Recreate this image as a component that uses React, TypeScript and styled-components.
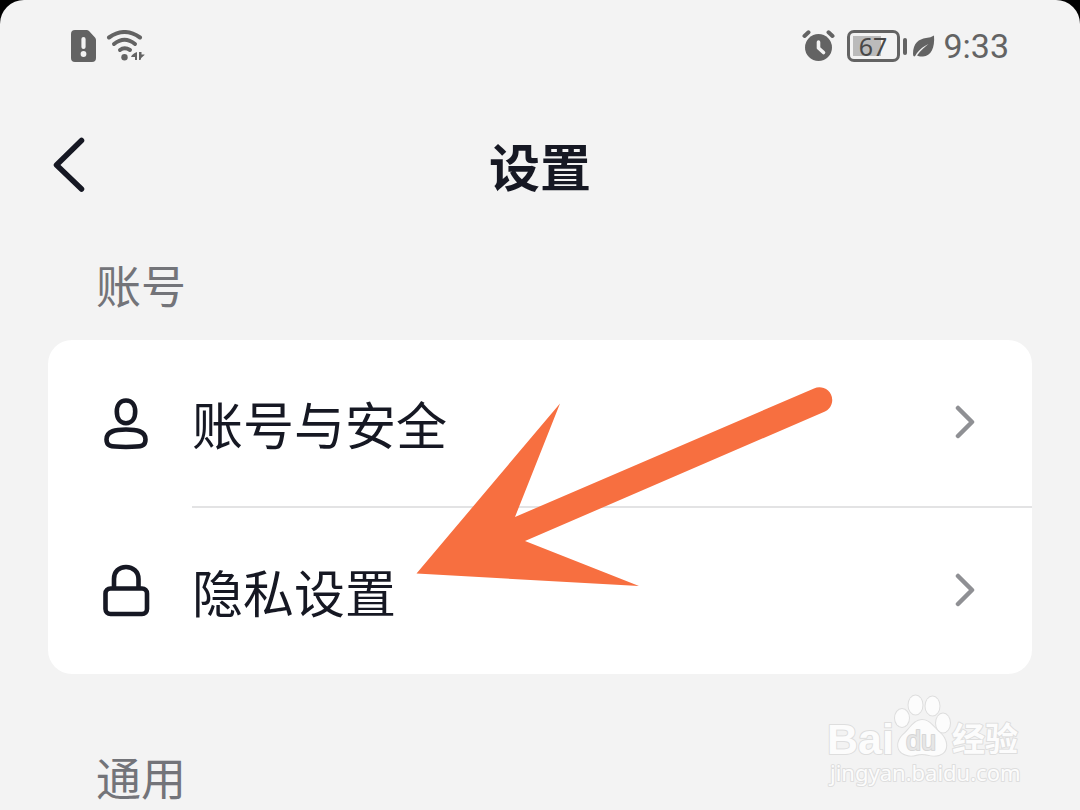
import React from "react";
import styled, { createGlobalStyle } from "styled-components";

const ink = "#161823";
const statusGrey = "#636363";
const surface = "#f3f3f3";

const GlobalStyle = createGlobalStyle`
  * { box-sizing: border-box; }
  body {
    margin: 0;
    background: #000;
    font-family: "Noto Sans CJK SC", "Noto Sans", sans-serif;
    color: ${ink};
  }
`;

const Screen = styled.div`
  position: relative;
  min-height: 100vh;
  background: ${surface};
  border-radius: 24px 24px 0 0;
  overflow: hidden;
`;

const StatusBar = styled.div`
  display: flex;
  justify-content: space-between;
  align-items: center;
  height: 92px;
  padding: 0 71px;
  color: ${statusGrey};
`;

const StatusGroup = styled.div<{ $gap?: number }>`
  display: flex;
  align-items: center;
  gap: ${(p) => p.$gap ?? 0}px;
`;

const Battery = styled.div`
  display: flex;
  align-items: center;
  gap: 3px;
  margin: 0 6px 0 12px;
`;

const BatteryShell = styled.div`
  display: flex;
  align-items: center;
  justify-content: center;
  width: 53px;
  height: 32px;
  padding-right: 2px;
  border: 3px solid ${statusGrey};
  border-radius: 7px;
  background: linear-gradient(#bbb, #bbb) 3px 3px / 28px 20px no-repeat;
  color: #484848;
  font: 400 25px/26px "Noto Sans", sans-serif;
`;

const BatteryTip = styled.div`
  width: 4px;
  height: 17px;
  border-radius: 2px;
  background: ${statusGrey};
`;

const Time = styled.time`
  margin-left: 8px;
  font: 400 34px/40px Roboto, sans-serif;
`;

const Header = styled.header`
  display: grid;
  grid-template-columns: 1fr auto 1fr;
  align-items: center;
  height: 146px;
  padding: 0 48px;
`;

const BackButton = styled.button`
  display: flex;
  justify-self: start;
  padding: 0;
  border: 0;
  background: none;
  color: inherit;
  cursor: pointer;
`;

const Title = styled.h1`
  margin: 0;
  font-size: 51px;
  line-height: 72px;
  font-weight: 700;
`;

const Section = styled.section`
  padding: 0 48px;
`;

const SectionTitle = styled.h2`
  margin: 0;
  padding: 16px 48px 24px;
  color: #737479;
  font-size: 45px;
  line-height: 62px;
  font-weight: 400;
`;

const Card = styled.div`
  position: relative;
  border-radius: 24px;
  background: #fff;
  margin-bottom: 56px;
`;

const Row = styled.a`
  display: flex;
  align-items: center;
  padding-left: 54px;
  color: inherit;
  text-decoration: none;
`;

const RowBody = styled.span<{ $divided?: boolean }>`
  display: flex;
  flex: 1;
  align-items: center;
  justify-content: space-between;
  height: ${(p) => (p.$divided ? 168 : 166)}px;
  margin-left: 42px;
  padding-right: 54px;
  border-bottom: ${(p) => (p.$divided ? "2px solid #e3e3e4" : "0")};
`;

const RowLabel = styled.span`
  font-size: 51px;
  line-height: 72px;
`;

const Pointer = styled.svg`
  position: absolute;
  top: 44px;
  left: 366px;
  pointer-events: none;
`;

const Watermark = styled.svg`
  position: absolute;
  right: 52px;
  top: 686px;
  pointer-events: none;
`;

const SimIcon = () => (
  <svg width="25" height="32" viewBox="0 0 25 32" aria-hidden="true">
    <path d="M4 0H15.500Q17 0 18 1L24 7.500Q25 8.500 25 10V28Q25 32 21 32H4Q0 32 0 28V4Q0 0 4 0Z" fill={statusGrey} />
    <path d="M12.500 9V17" stroke={surface} strokeWidth="4.200" strokeLinecap="round" />
    <circle cx="12.500" cy="24" r="2.900" fill={surface} />
  </svg>
);

const WifiIcon = () => (
  <svg width="40" height="32" viewBox="0 0 40 32" aria-hidden="true">
    <g fill="none" stroke={statusGrey} strokeWidth="4" strokeLinecap="round">
      <path d="M3 7.500Q18.500 -3.500 34 7.500" />
      <path d="M8 14Q18.500 5.500 29 14" />
      <path d="M14 20Q18.500 16.500 24 20" />
    </g>
    <circle cx="18.500" cy="27.300" r="3.200" fill={statusGrey} />
    <path d="M31 22V30H29V27H25Q26 24 31 22ZM33 22V30H34.500Q35 27.500 38.500 25V24.500H35.500V22Z" fill={statusGrey} />
  </svg>
);

const AlarmIcon = () => (
  <svg width="33" height="32" viewBox="0 0 33 32" aria-hidden="true">
    <circle cx="16.500" cy="17.500" r="13.500" fill={statusGrey} />
    <path d="M2.500 6L6.500 2.300M30.500 6L26.500 2.300" stroke={statusGrey} strokeWidth="4" strokeLinecap="round" />
    <path d="M16.500 12V18L21.500 22.500" fill="none" stroke={surface} strokeWidth="3.600" strokeLinecap="round" strokeLinejoin="round" />
  </svg>
);

const LeafIcon = () => (
  <svg width="22" height="23" viewBox="0 0 22 23" aria-hidden="true">
    <path d="M21 0.500C22 13 18 21 10 21.500C7 21.700 5 21 4 20.500C8 15 12 12 15.500 9C9 12 5 16 2.500 20.500L1.500 21.500Q0 21.500 0 19C0 8 6 4 13 3Q18 2.500 21 0.500Z" fill={statusGrey} />
  </svg>
);

const BackIcon = () => (
  <svg width="40" height="56" viewBox="0 0 40 56" aria-hidden="true">
    <path d="M33.500 3.500L8.500 28L33.500 52" fill="none" stroke="currentColor" strokeWidth="5.500" strokeLinecap="round" strokeLinejoin="round" />
  </svg>
);

const UserIcon = () => (
  <svg width="48" height="54" viewBox="0 0 48 54" fill="none" stroke={ink} strokeWidth="4.600" aria-hidden="true">
    <path d="M24 3.500C30 3.500 33.200 8 33.200 14.500C33.200 21.500 30 26.200 24 26.200C18 26.200 14.800 21.500 14.800 14.500C14.800 8 18 3.500 24 3.500Z" />
    <path d="M24 32.500C34 32.500 43.500 33.800 43.500 42.500C43.500 49 41 50 24 50C7 50 4.500 49 4.500 42.500C4.500 33.800 14 32.500 24 32.500Z" />
  </svg>
);

const LockIcon = () => (
  <svg width="48" height="54" viewBox="0 0 48 54" fill="none" stroke={ink} strokeWidth="4.600" aria-hidden="true">
    <rect x="3.500" y="24.500" width="41.500" height="25.500" rx="5" />
    <path d="M12 24.500V15C12 7.500 17 3 24 3C31 3 36.500 7.500 36.500 15V24.500" />
  </svg>
);

const ChevronIcon = () => (
  <svg width="24" height="36" viewBox="0 0 24 36" aria-hidden="true">
    <path d="M4 3L18 17L4 31" fill="none" stroke="#8f9094" strokeWidth="4.500" strokeLinecap="round" strokeLinejoin="round" />
  </svg>
);

export default function App() {
  return (
    <>
      <GlobalStyle />
      <Screen>
        <StatusBar>
          <StatusGroup $gap={10}>
            <SimIcon />
            <WifiIcon />
          </StatusGroup>
          <StatusGroup>
            <AlarmIcon />
            <Battery>
              <BatteryShell>67</BatteryShell>
              <BatteryTip />
            </Battery>
            <LeafIcon />
            <Time>9:33</Time>
          </StatusGroup>
        </StatusBar>
        <Header>
          <BackButton type="button" aria-label="返回">
            <BackIcon />
          </BackButton>
          <Title>设置</Title>
        </Header>
        <Section>
          <SectionTitle>账号</SectionTitle>
          <Card>
            <Row href="#account">
              <UserIcon />
              <RowBody $divided>
                <RowLabel>账号与安全</RowLabel>
                <ChevronIcon />
              </RowBody>
            </Row>
            <Row href="#privacy">
              <LockIcon />
              <RowBody>
                <RowLabel>隐私设置</RowLabel>
                <ChevronIcon />
              </RowBody>
            </Row>
            <Pointer width="420" height="208" viewBox="414 384 420 208" aria-hidden="true">
              <path d="M416.500 573.500L560 403.500L515 517L814 388.500A12.600 12.600 0 0 1 825 411.500L525 541L639 586Z" fill="#f76f40" />
            </Pointer>
          </Card>
        </Section>
        <Section>
          <SectionTitle>通用</SectionTitle>
        </Section>
        <Watermark width="208" height="110" viewBox="820 686 208 110">
          <g fill="#fcfcfc" stroke="#dedede" strokeWidth="2" paintOrder="stroke" strokeLinejoin="round">
            <text x="827" y="754" fontFamily="Liberation Sans, sans-serif" fontWeight="700" fontSize="43">Bai</text>
            <ellipse cx="902" cy="718" rx="7" ry="9" />
            <ellipse cx="915.500" cy="705" rx="7" ry="9.500" />
            <ellipse cx="932.500" cy="706" rx="7" ry="9.500" />
            <ellipse cx="943" cy="723" rx="7" ry="9.500" />
            <path d="M922 720C930 720 934 728 940 733C948 740 949 752 939 755C931 757 928 754 922 754C916 754 913 757 907 755C896 752 896 742 903 735C910 729 914 720 922 720Z" />
            <text x="906" y="750" fontFamily="Liberation Sans, sans-serif" fontWeight="400" fontSize="27" fill="#e6e6e6" stroke="#d6d6d6">du</text>
            <text x="952" y="751" fontFamily="Noto Sans CJK SC, sans-serif" fontWeight="700" fontSize="33">经验</text>
            <text x="830" y="781" fontFamily="Noto Sans, sans-serif" fontSize="22">jingyan.baidu.com</text>
          </g>
        </Watermark>
      </Screen>
    </>
  );
}
